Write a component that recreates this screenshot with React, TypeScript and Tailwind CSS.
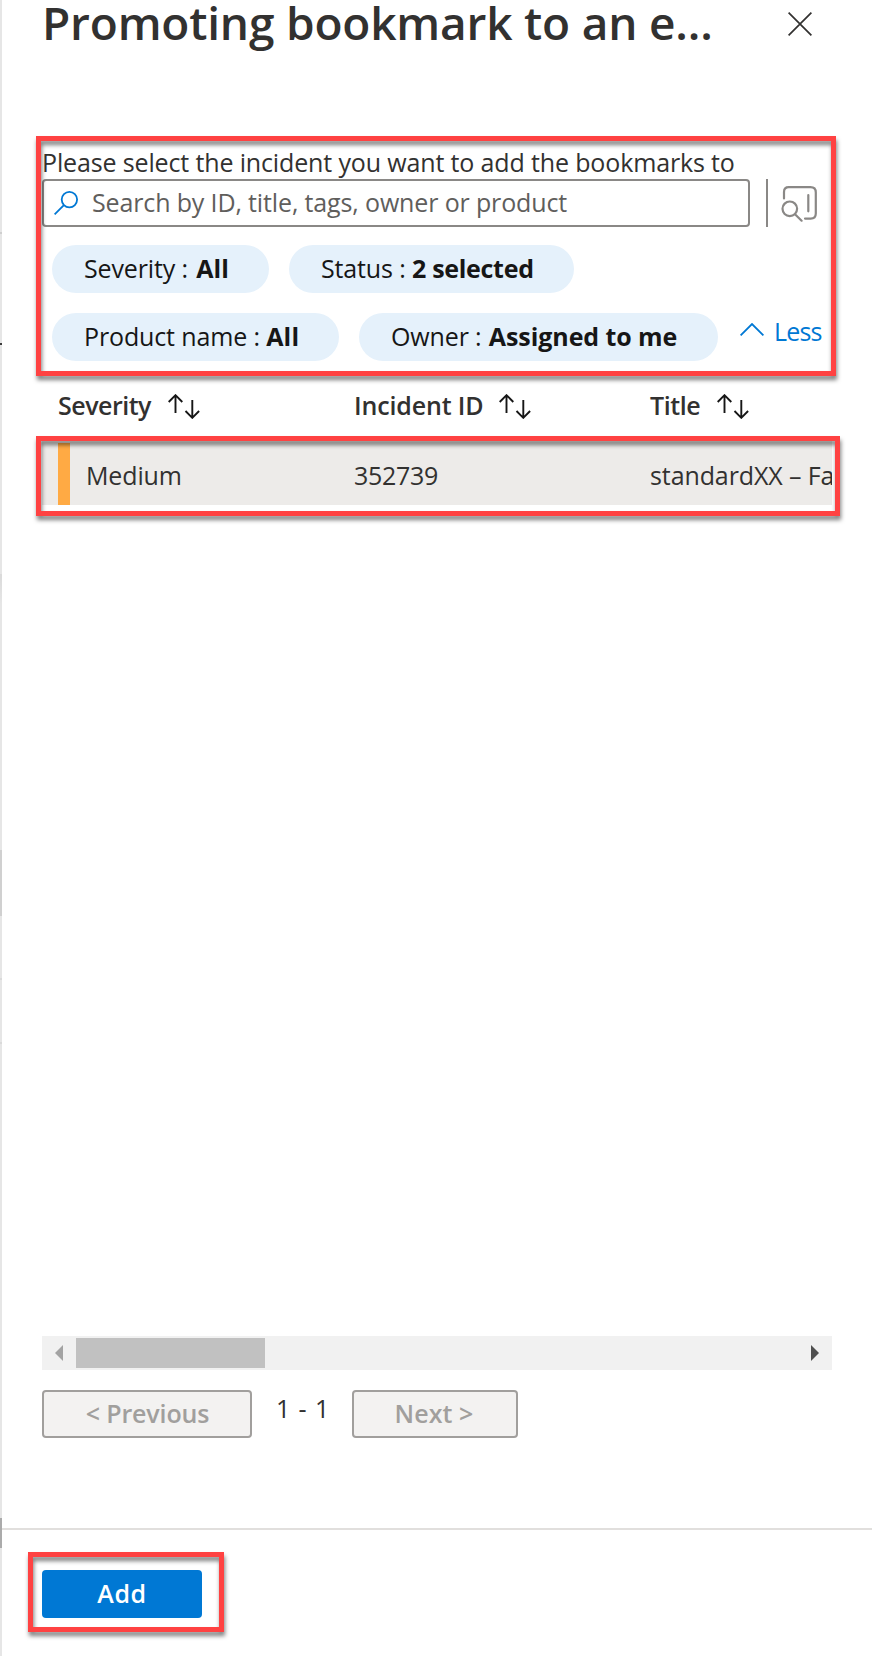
function Highlight({ className }: { className: string }) {
  return (
    <div
      className={`pointer-events-none absolute z-10 border-[5px] border-[#ff4242] drop-shadow-[1px_4px_2px_rgba(0,0,0,0.5)] ${className}`}
    />
  );
}

function SortIcon() {
  return (
    <svg width="32" height="25" viewBox="0 0 32 25" fill="none" stroke="#161616" strokeWidth="1.9">
      <path d="M7.5 19V1.2M0.7 8L7.5 1.2L14.3 8" />
      <path d="M24.3 6V23.8M17.5 17L24.3 23.8L31.1 17" />
    </svg>
  );
}

function Pill({
  label,
  value,
  className,
  valueClassName,
}: {
  label: string;
  value: string;
  className: string;
  valueClassName: string;
}) {
  return (
    <button className={`flex h-12 items-center whitespace-nowrap rounded-full bg-[#e5f1fb] pb-[3px] pl-[32px] text-[#161616] ${className}`}>
      <span className="whitespace-pre">{label} : </span>
      <span className={`font-bold ${valueClassName}`}>{value}</span>
    </button>
  );
}

function Column({ title, className }: { title: string; className: string }) {
  return (
    <div className={`flex shrink-0 items-center font-semibold ${className}`}>
      <span className="pb-[2px]">{title}</span>
      <SortIcon />
    </div>
  );
}

function PagerButton({ label, className }: { label: string; className: string }) {
  return (
    <button
      className={`flex h-12 items-center justify-center rounded-[4px] border-2 border-[#a19f9d] bg-[#f3f2f1] pb-[3px] font-semibold text-[#a19f9d] ${className}`}
    >
      {label}
    </button>
  );
}

const edge = [
  "h-[232px] bg-[#e6e6e6]",
  "h-[2px] bg-[#cfcfcf]",
  "h-[109px] bg-[#e6e6e6]",
  "h-[2px] bg-[#3c3c3c]",
  "h-[229px] bg-[#e6e6e6]",
  "h-[30px] bg-linear-to-b from-[#dadada] to-[#e6e6e6]",
  "h-[246px] bg-[#e6e6e6]",
  "h-[66px] bg-[#d0d0d0]",
  "h-[62px] bg-[#e6e6e6]",
  "h-[2px] bg-[#dadada]",
  "h-[62px] bg-[#e6e6e6]",
  "h-[2px] bg-[#dadada]",
  "h-[474px] bg-[#e6e6e6]",
  "h-[30px] bg-[#ababab]",
  "h-[108px] bg-[#e6e6e6]",
];

export default function App() {
  return (
    <div className="flex h-[1656px] w-[872px] overflow-hidden bg-white font-['Open_Sans',sans-serif] text-[25px] leading-[34px] tracking-[-0.14px] text-[#323130]">
      <div className="flex w-[2px] shrink-0 flex-col">
        {edge.map((segment, i) => (
          <div key={i} className={segment} />
        ))}
      </div>

      <div className="flex w-[870px] flex-col">
        <header className="flex h-[136px] items-start justify-between pl-[40px] pr-[60px]">
          <h1 className="h-[44px] whitespace-nowrap text-[46px] font-semibold leading-[44px] tracking-[-0.19px]">
            Promoting bookmark to an e...
          </h1>
          <svg className="mt-3" width="24" height="24" viewBox="0 0 24 24" fill="none" stroke="#323130" strokeWidth="1.7">
            <path d="M0.6 0.6L23.4 23.4M23.4 0.6L0.6 23.4" />
          </svg>
        </header>

        <section className="relative flex h-[240px] flex-col pl-[40px] pt-[9px]">
          <Highlight className="left-[34px] top-0 h-[240px] w-[800px]" />
          <p className="h-[34px] whitespace-nowrap">Please select the incident you want to add the bookmarks to</p>
          <div className="flex h-12 items-center">
            <div className="flex h-12 w-[708px] items-center rounded-[4px] border-2 border-[#8a8886] pl-[10px]">
              <svg width="24" height="24" viewBox="0 0 24 24" fill="none" stroke="#0078d4" strokeWidth="1.8">
                <circle cx="15.4" cy="8.6" r="7.7" />
                <path d="M9.9 14.1L0.6 23.4" />
              </svg>
              <span className="ml-[14px] whitespace-nowrap pb-[3px] text-[#605e5c]">Search by ID, title, tags, owner or product</span>
            </div>
            <div className="ml-4 h-12 w-[2px] bg-[#8a8886]" />
            <svg className="ml-[13px] mt-px" width="36" height="36" viewBox="0 0 36 36" fill="none" stroke="#8a8886" strokeWidth="2.2" strokeLinecap="round">
              <path d="M3 12.5V6Q3 1.2 7.8 1.2H29.5Q34.8 1.2 34.8 6.5V27.5Q34.8 32.6 29.7 32.6H24" />
              <path d="M27.3 9V25.3" />
              <circle cx="8.8" cy="22.8" r="7.3" />
              <path d="M14 28.2L20.6 34.7" />
            </svg>
          </div>
          <div className="mt-[18px] flex gap-5 pl-[10px]">
            <Pill label="Severity" value="All" className="w-[217px]" valueClassName="ml-[2px] tracking-[0.1px]" />
            <Pill label="Status" value="2 selected" className="w-[285px]" valueClassName="tracking-[-0.3px]" />
          </div>
          <div className="mt-5 flex gap-5 pl-[10px]">
            <Pill label="Product name" value="All" className="w-[287px]" valueClassName="tracking-[0.2px]" />
            <Pill label="Owner" value="Assigned to me" className="w-[359px]" valueClassName="ml-px tracking-[-0.08px]" />
            <button className="flex h-[38px] items-start text-[#0078d4]">
              <svg className="ml-[2px] mt-[10px]" width="24" height="13" viewBox="0 0 24 13" fill="none" stroke="#0078d4" strokeWidth="1.8">
                <path d="M0.6 12.4L12 1L23.4 12.4" />
              </svg>
              <span className="ml-[10px] mt-px tracking-[-0.8px]">Less</span>
            </button>
          </div>
        </section>

        <div className="flex h-[60px] items-center pl-[56px]">
          <Column title="Severity" className="w-[296px] gap-[17px] tracking-[-0.5px]" />
          <Column title="Incident ID" className="w-[296px] gap-[15px]" />
          <Column title="Title" className="gap-[17px] tracking-[-0.4px]" />
        </div>

        <div className="relative h-[900px] pt-[5px]">
          <Highlight className="left-[34px] top-0 h-[80px] w-[804px]" />
          <div className="ml-[40px] flex h-[64px] w-[790px] items-end overflow-hidden bg-[#edebe9] pl-[16px]">
            <div className="h-[62px] w-[12px] shrink-0 bg-[#ffaa44]" />
            <div className="flex h-[62px] items-center whitespace-nowrap pt-[2px]">
              <span className="w-[284px] pl-[16px]">Medium</span>
              <span className="w-[296px] tracking-[-0.3px]">352739</span>
              <span className="tracking-[-0.1px]">standardXX – Fa</span>
            </div>
          </div>
        </div>

        <div className="ml-[40px] flex h-[34px] w-[790px] items-center bg-[#f1f1f1]">
          <svg className="ml-[13px]" width="8" height="16" viewBox="0 0 8 16" fill="#a3a3a3">
            <path d="M8 0V16L0 8Z" />
          </svg>
          <div className="ml-[13px] h-[30px] w-[189px] bg-[#c1c1c1]" />
          <svg className="ml-auto mr-[13px]" width="8" height="16" viewBox="0 0 8 16" fill="#505050">
            <path d="M0 0V16L8 8Z" />
          </svg>
        </div>

        <div className="ml-[40px] mt-5 flex h-[138px] items-start">
          <PagerButton label="< Previous" className="w-[210px] pl-px" />
          <span className="ml-[24px] mt-px w-[76px] tracking-[0.9px]">1 - 1</span>
          <PagerButton label="Next >" className="w-[166px] pr-[2px] tracking-[0.1px]" />
        </div>

        <footer className="relative flex-1 border-t-2 border-[#e1dfdd] pl-[40px] pt-[40px]">
          <Highlight className="left-[26px] top-[22px] h-[80px] w-[196px]" />
          <button className="flex h-12 w-[160px] items-center justify-center rounded-[4px] bg-[#0078d4] pb-[3px] font-semibold tracking-[0.6px] text-white">
            Add
          </button>
        </footer>
      </div>
    </div>
  );
}
